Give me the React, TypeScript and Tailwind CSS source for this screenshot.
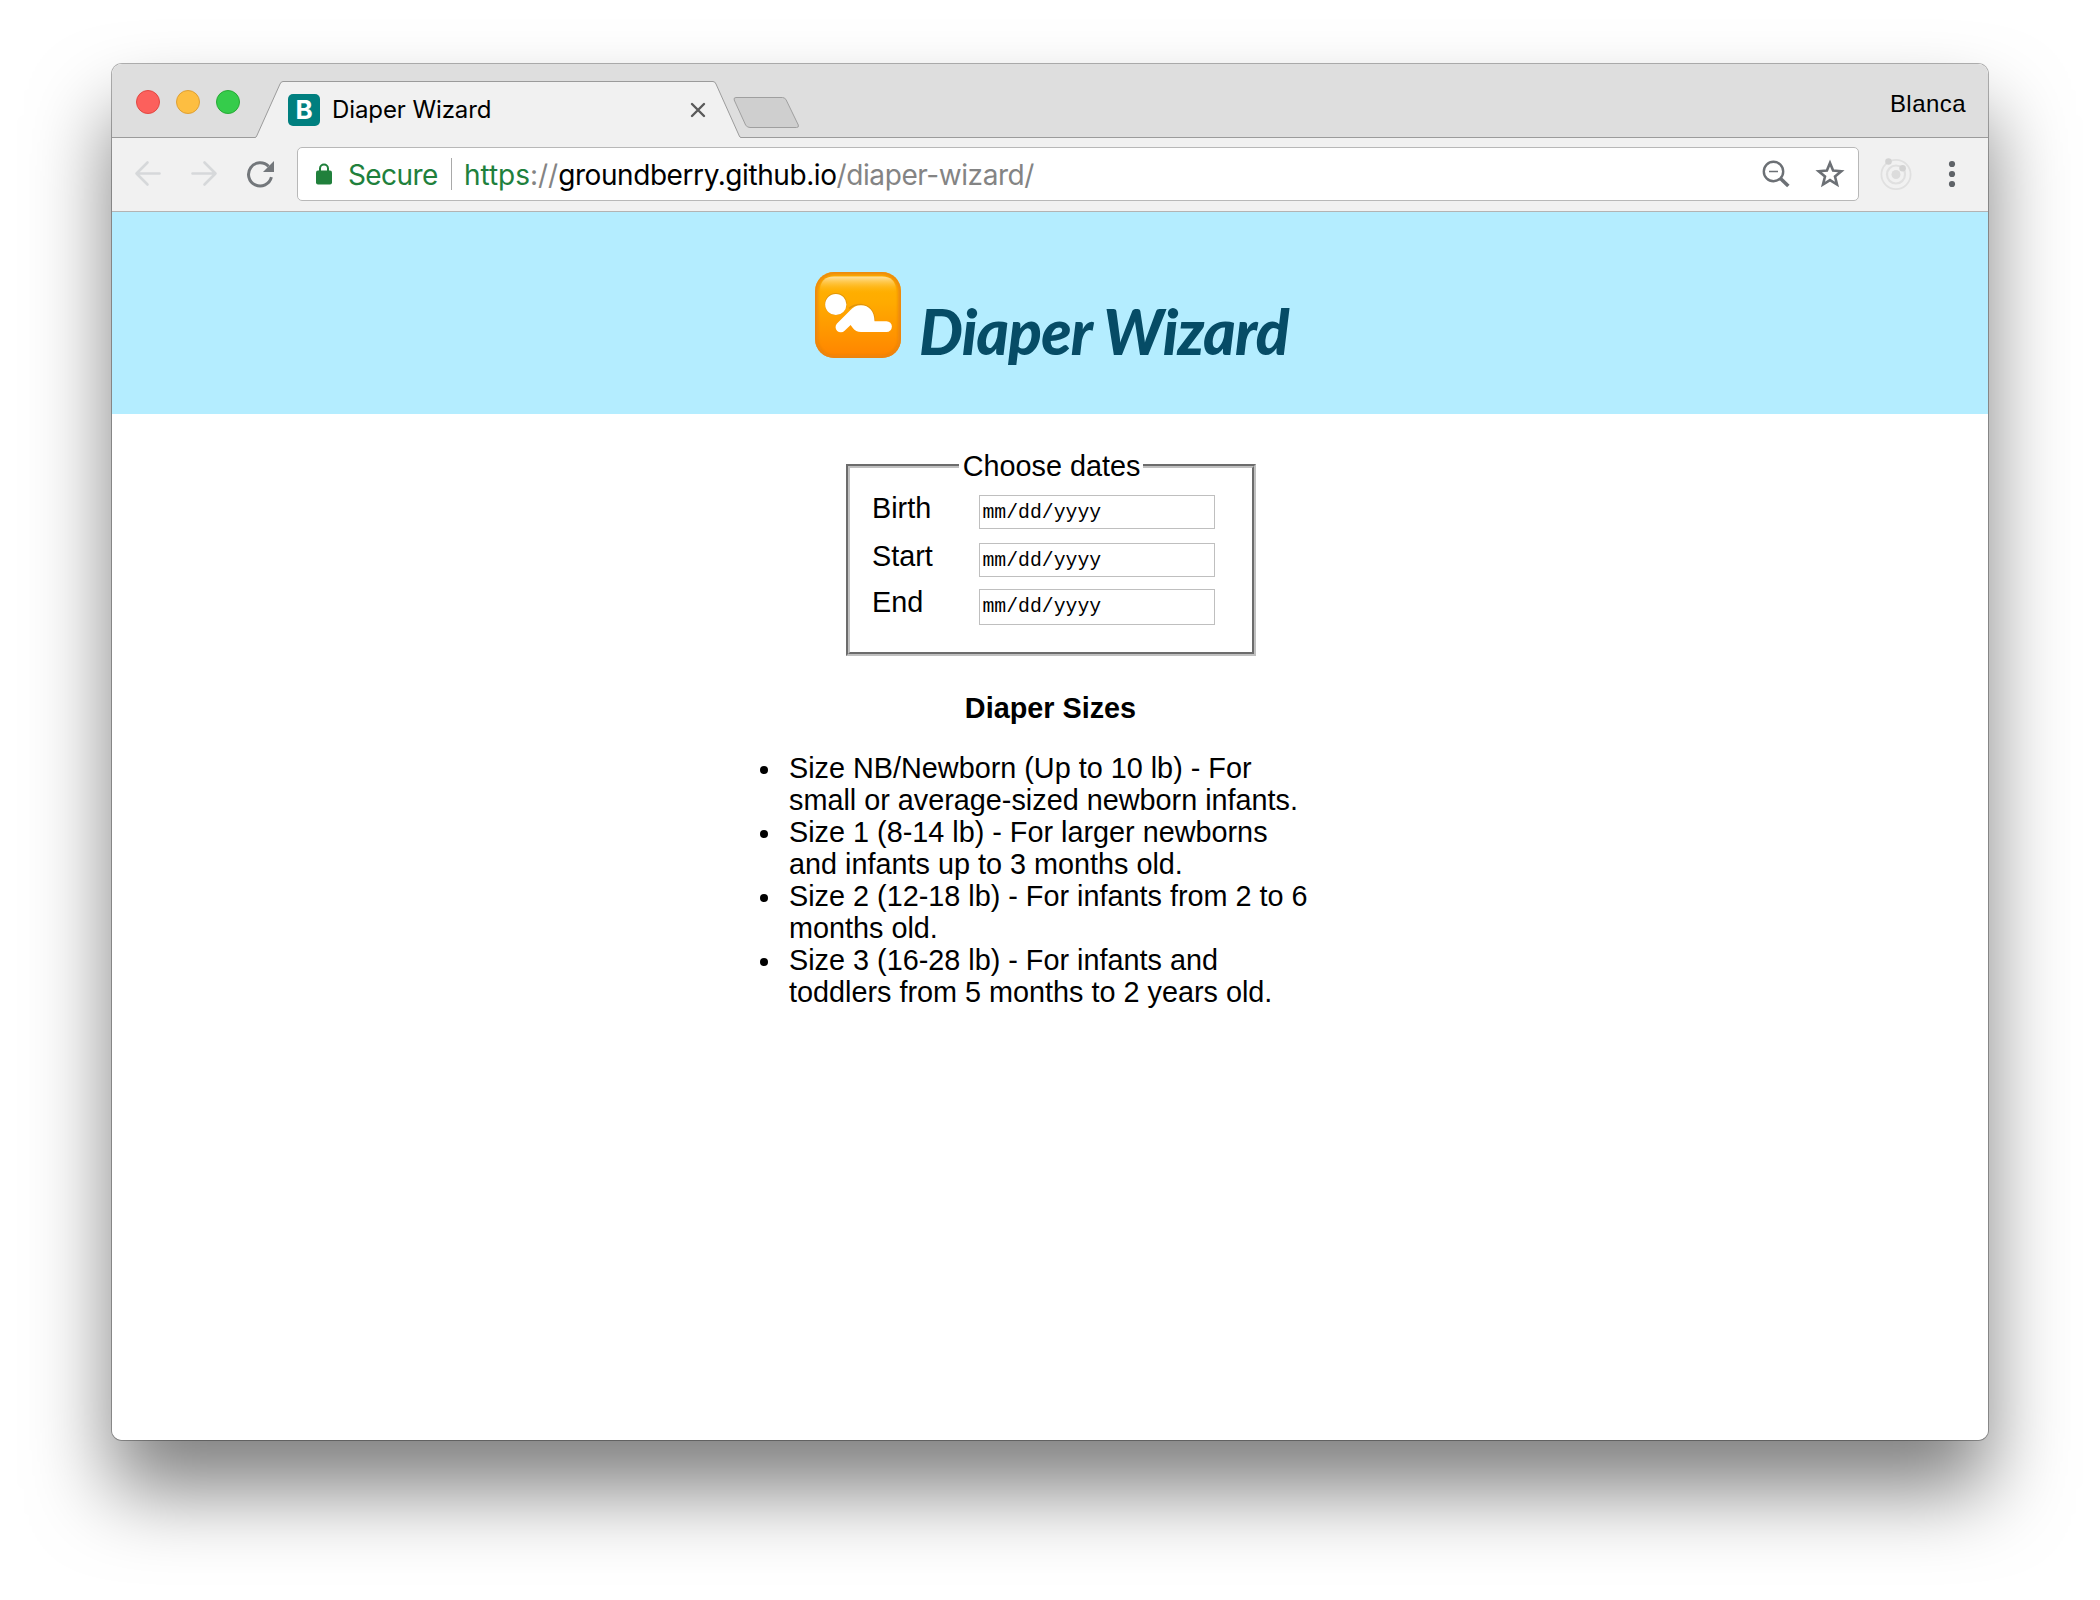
import React from "react";

const UI = "font-['Inter','Liberation_Sans',sans-serif]";

function TitleBar() {
  return (
    <div className="flex h-[74px] items-end border-b border-[#9b9b9b] bg-[#dedede]">
      <div className="flex gap-4 self-start pt-[26px] pl-6">
        <span className="size-6 rounded-full border border-[#e24842] bg-[#fc605c]" />
        <span className="size-6 rounded-full border border-[#dfa034] bg-[#fdbe41]" />
        <span className="size-6 rounded-full border border-[#27aa35] bg-[#35cc4b]" />
      </div>
      <div className="-mb-px ml-[15px] flex h-[57px]">
        <svg width="28" height="57" viewBox="0 0 28 57" className="shrink-0">
          <path d="M0 57V56.5Q1 56.5 1.7 55L25 3Q26 0.5 28 0.5V57Z" fill="#f1f1f1" />
          <path d="M0 56.5Q1 56.5 1.7 55L25 3Q26 0.5 28 0.5" fill="none" stroke="#9b9b9b" />
        </svg>
        <div className="flex w-[430px] border-t border-[#9b9b9b] bg-[#f1f1f1] pl-[5px]">
          <span className="mt-3 flex size-8 shrink-0 items-center justify-center rounded-[5px] bg-[#007f7f] font-['Inter',sans-serif] text-[26px] leading-8 font-bold text-white">
            B
          </span>
          <span className={`${UI} mt-3 ml-3 w-[358px] text-[24px] leading-8 tracking-[-0.1px] text-black`}>
            Diaper Wizard
          </span>
          <svg width="16" height="16" viewBox="0 0 16 16" className="mt-5 shrink-0">
            <path d="M2 2L14 14M14 2L2 14" stroke="#5a5a5a" strokeWidth="2.4" strokeLinecap="round" />
          </svg>
        </div>
        <svg width="28" height="57" viewBox="0 0 28 57" className="shrink-0">
          <path d="M28 57V56.5Q27 56.5 26.3 55L3 3Q2 0.5 0 0.5V57Z" fill="#f1f1f1" />
          <path d="M28 56.5Q27 56.5 26.3 55L3 3Q2 0.5 0 0.5" fill="none" stroke="#9b9b9b" />
        </svg>
      </div>
      <svg width="67" height="33" viewBox="0 0 67 33" className="mb-2 -ml-[8px]">
        <path
          d="M3 1.5H49.5Q52 1.5 53.2 4L65.3 29Q66.2 31.5 63.5 31.5H17Q14 31.5 12.6 29L1.2 4Q0.4 1.5 3 1.5Z"
          fill="#cfcfcf"
          stroke="#9f9f9f"
        />
      </svg>
      <span className="mr-[22px] mb-[17px] ml-auto font-['Liberation_Sans',sans-serif] text-[24px] leading-8 tracking-[0.45px] text-black">
        Blanca
      </span>
    </div>
  );
}

function Toolbar() {
  return (
    <div className="flex h-[74px] items-start border-b border-[#b3b3b3] bg-[#f1f1f1]">
      <svg width="28" height="28" viewBox="0 0 28 28" className="mt-[22px] ml-[22px]" fill="none" stroke="#d6d8da" strokeWidth="2.6" strokeLinecap="round" strokeLinejoin="round">
        <path d="M25.5 13.5H2.500M13.500 2.500L2.500 13.500L13.500 24.500" />
      </svg>
      <svg width="28" height="28" viewBox="0 0 28 28" className="mt-[22px] ml-[28px]" fill="none" stroke="#d6d8da" strokeWidth="2.6" strokeLinecap="round" strokeLinejoin="round">
        <path d="M2.500 13.500H25.500M14.500 2.500L25.500 13.500L14.500 24.500" />
      </svg>
      <svg width="28" height="28" viewBox="0 0 28 28" className="mt-[22px] ml-[28px]">
        <path d="M25.4 17.2A11.6 11.6 0 1 1 22.6 6.4" fill="none" stroke="#73777b" strokeWidth="3" />
        <path d="M28 1V12H17Z" fill="#73777b" />
      </svg>
      <div className="mt-[9px] ml-[23px] flex h-[54px] w-[1562px] items-center rounded-[5px] border border-[#b8b8b8] bg-white">
        <svg width="16" height="22" viewBox="0 0 16 22" className="ml-[18px]">
          <path d="M4 9V5.500a4 4 0 0 1 8 0V9" fill="none" stroke="#20803c" strokeWidth="2" />
          <rect y="7.500" width="16" height="14" rx="2" fill="#20803c" />
        </svg>
        <span className={`${UI} mt-[2px] ml-[16px] w-[103px] text-[28px] leading-8 tracking-[-0.6px] text-[#20803c]`}>Secure</span>
        <span className="h-8 w-px bg-[#a9a9a9]" />
        <span className={`${UI} mt-[2px] ml-[12px] text-[28px] leading-8 tracking-[-0.42px] whitespace-nowrap text-[#848484]`}>
          <span className="tracking-[-0.03px]">
            <span className="text-[#20803c]">https</span>://
          </span>
          <span className="text-black">groundberry.github.io</span>/diaper-wizard/
        </span>
        <svg width="28" height="28" viewBox="0 0 28 28" className="mr-[25px] ml-auto" fill="none" stroke="#6c7075">
          <circle cx="11.5" cy="11.5" r="9.7" strokeWidth="2.4" />
          <path d="M7 11.5H16" strokeWidth="1.6" />
          <path d="M18.5 18.5L26.3 26" strokeWidth="3.6" />
        </svg>
        <svg width="30" height="30" viewBox="0 0 30 30" className="mr-[13px]" fill="none" stroke="#6c7075" strokeWidth="2.6">
          <path d="M15 4L18.1 11.6L26.3 12.2L20 17.500L22 25.500L15 21.100L8 25.500L10 17.500L3.700 12.200L11.900 11.600Z" />
        </svg>
      </div>
      <svg width="32" height="34" viewBox="0 0 32 34" className="mt-[19px] ml-[21px]" fill="none" stroke="#e0e0e0">
        <circle cx="16" cy="17.5" r="14.6" strokeWidth="1.8" />
        <circle cx="16" cy="17.5" r="9" strokeWidth="2.2" />
        <circle cx="16" cy="17.5" r="4.5" fill="#dcdcdc" stroke="none" />
        <circle cx="8.5" cy="4.5" r="3.3" fill="#d3d3d3" stroke="none" />
        <circle cx="22.6" cy="11.3" r="3.3" fill="#d3d3d3" stroke="none" />
      </svg>
      <svg width="8" height="28" viewBox="0 0 8 28" className="mt-[22px] ml-[36px]" fill="#5f6368">
        <circle cx="4" cy="4" r="3.1" />
        <circle cx="4" cy="14" r="3.1" />
        <circle cx="4" cy="24" r="3.1" />
      </svg>
    </div>
  );
}

function BabyIcon() {
  return (
    <svg width="86" height="86" viewBox="0 0 86 86" className="shrink-0">
      <defs>
        <linearGradient id="body" x1="0" y1="0" x2="0" y2="1">
          <stop offset="0" stopColor="#ffb400" />
          <stop offset="0.35" stopColor="#ffab00" />
          <stop offset="1" stopColor="#ff8400" />
        </linearGradient>
        <linearGradient id="gloss" x1="0" y1="0" x2="0" y2="1">
          <stop offset="0" stopColor="#ffe2a0" />
          <stop offset="1" stopColor="#ffb000" stopOpacity="0" />
        </linearGradient>
        <filter id="soft" x="-10%" y="-10%" width="120%" height="120%">
          <feGaussianBlur stdDeviation="1.5" />
        </filter>
        <clipPath id="tile">
          <rect width="86" height="86" rx="19" />
        </clipPath>
      </defs>
      <rect width="86" height="86" rx="19" fill="url(#body)" />
      <g clipPath="url(#tile)">
        <rect x="0.5" y="0.5" width="85" height="85" rx="19" fill="none" stroke="#e98208" strokeOpacity="0.85" strokeWidth="5" filter="url(#soft)" />
      </g>
      <path d="M5 22V19Q5 4.500 19 4.500H67Q81 4.500 81 19V22Z" fill="url(#gloss)" />
      <g stroke="#b87a18" strokeOpacity="0.45" strokeWidth="1.4" transform="translate(0 -0.6)" fill="none">
        <circle cx="20.800" cy="32.500" r="10.300" />
        <path d="M34 37Q39 33 46 33Q59 35 59.500 49" />
      </g>
      <g fill="#fff">
        <circle cx="20.800" cy="32.500" r="10.600" />
        <path d="M22 51.500L35 38.500Q39.500 33.300 46 33.300C54 33.300 59.500 39.500 59.500 49.200H71.500A5.300 5.300 0 0 1 71.500 60H46Q40.500 60 38 56.300L35.600 53L29.600 58.700A5.200 5.200 0 0 1 22 51.500Z" />
      </g>
    </svg>
  );
}

function PageHeader() {
  return (
    <header className="flex h-[202px] items-start bg-[#b4edff] pt-[60px] pl-[703px]">
      <BabyIcon />
      <h1 className="mt-[21px] ml-[18px] font-['Lato','Liberation_Sans',sans-serif] text-[62px] leading-[76px] font-black tracking-[-0.8px] whitespace-nowrap text-[#064c66] italic">
        Diaper Wizard
      </h1>
    </header>
  );
}

const DATE_BOX =
  "mt-[3px] w-[236px] border border-[#bfbfbf] pl-[2.500px] font-['Liberation_Mono',monospace] text-[19.8px] leading-[34px]";

function DateForm() {
  return (
    <fieldset className="mt-[34px] ml-[734px] h-[208px] w-[410px] border-4 border-[#c0c0c0] px-[22px] pt-[8px] [border-style:groove]">
      <legend className="mx-auto pr-[3px] pl-1 leading-9">Choose dates</legend>
      <div className="flex h-[48px]">
        <label className="w-[107px] leading-8">Birth</label>
        <div className={`${DATE_BOX} h-[34px]`}>mm/dd/yyyy</div>
      </div>
      <div className="flex h-[46px]">
        <label className="w-[107px] leading-8">Start</label>
        <div className={`${DATE_BOX} h-[34px]`}>mm/dd/yyyy</div>
      </div>
      <div className="flex h-[46px]">
        <label className="w-[107px] leading-8">End</label>
        <div className={`${DATE_BOX} h-[36px]`}>mm/dd/yyyy</div>
      </div>
    </fieldset>
  );
}

const SIZES = [
  ["Size NB/Newborn (Up to 10 lb) - For", "small or average-sized newborn infants."],
  ["Size 1 (8-14 lb) - For larger newborns", "and infants up to 3 months old."],
  ["Size 2 (12-18 lb) - For infants from 2 to 6", "months old."],
  ["Size 3 (16-28 lb) - For infants and", "toddlers from 5 months to 2 years old."],
];

function SizeList() {
  return (
    <section className="mx-auto w-[576px]">
      <h2 className="mt-[36px] pl-px text-center leading-8 font-bold">Diaper Sizes</h2>
      <ul className="mt-[28px] leading-8 whitespace-nowrap">
        {SIZES.map(([first, second]) => (
          <li key={first} className="flex">
            <span className="mt-[14px] mr-[21px] ml-[-2px] size-2 shrink-0 rounded-full bg-black" />
            <span>
              {first}
              <br />
              {second}
            </span>
          </li>
        ))}
      </ul>
    </section>
  );
}

export default function App() {
  return (
    <div className="h-[1600px] w-[2100px] overflow-hidden bg-white pt-16">
      <div className="mx-auto h-[1376px] w-[1876px] rounded-[10px] shadow-[0_0_0_1px_rgba(0,0,0,0.3),0_50px_80px_rgba(0,0,0,0.5)]">
        <div className="h-full overflow-hidden rounded-[10px] bg-white">
          <TitleBar />
          <Toolbar />
          <PageHeader />
          <main className="font-['Liberation_Sans',sans-serif] text-[28.8px] text-black">
            <DateForm />
            <SizeList />
          </main>
        </div>
      </div>
    </div>
  );
}
